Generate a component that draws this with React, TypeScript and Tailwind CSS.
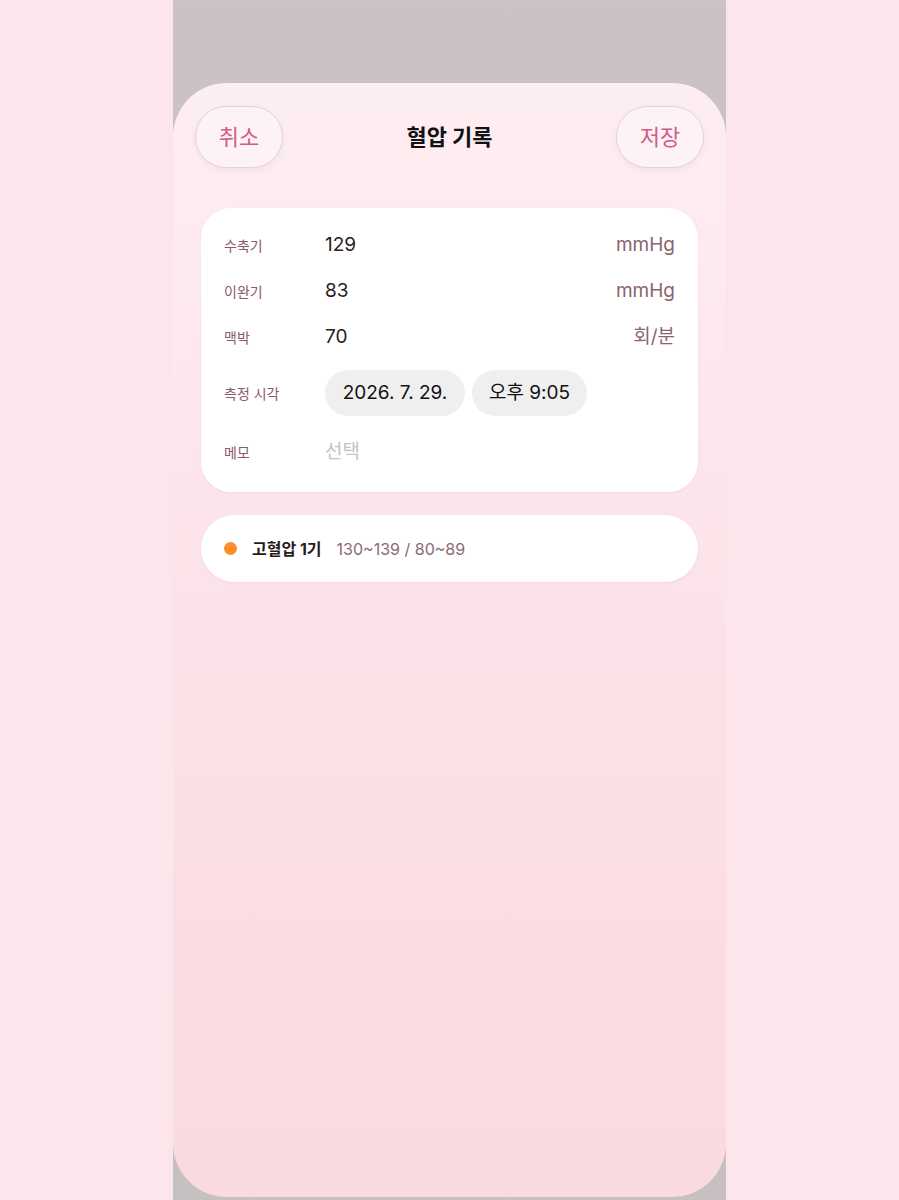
const font = 'font-["Inter","Noto_Sans_CJK_KR",sans-serif]';

type Row = { label: string; value: string; unit: string };

const rows: Row[] = [
  { label: '수축기', value: '129', unit: 'mmHg' },
  { label: '이완기', value: '83', unit: 'mmHg' },
  { label: '맥박', value: '70', unit: '회/분' },
];

function PillButton({ label }: { label: string }) {
  return (
    <button
      type="button"
      className="w-[88px] h-[62px] rounded-full border border-[#e3d3d8] bg-[#fdf3f6] shadow-[0_2px_6px_rgba(180,120,140,0.12)] text-[22px] text-[#d35b85] flex items-center justify-center"
    >
      {label}
    </button>
  );
}

export default function App() {
  return (
    <div className={`w-full h-[1200px] bg-[#fce6ec] flex justify-center ${font}`}>
      <div className="w-[553px] bg-gradient-to-b from-[#cbc2c4] to-[#c6c0c1] pt-[83px] pb-[3px] flex flex-col">
        <div className="flex-1 rounded-[54px] bg-gradient-to-b from-[#fdeef2] via-[#fce2e8] to-[#f9dae1] flex flex-col">
          <div className="flex items-center justify-between px-[22px] pt-[23px]">
            <PillButton label="취소" />
            <h1 className="text-[22px] font-bold text-[#111111]">혈압 기록</h1>
            <PillButton label="저장" />
          </div>

          <div className="mx-[28px] mt-[40px] bg-white rounded-[30px] px-[23px] pt-[14px] pb-[17px] shadow-[0_1px_3px_rgba(200,150,165,0.15)]">
            {rows.map((row) => (
              <div key={row.label} className="h-[46px] flex items-center">
                <span className="w-[101px] text-[14px] text-[#8a5a6a]">{row.label}</span>
                <span className="flex-1 text-[19px] text-[#2a1a20]">{row.value}</span>
                <span className="text-[19px] text-[#8a6470]">{row.unit}</span>
              </div>
            ))}
            <div className="h-[46px] mt-[10px] flex items-center">
              <span className="w-[101px] text-[14px] text-[#8a5a6a]">측정 시각</span>
              <div className="flex items-center gap-[7px]">
                <span className="h-[46px] w-[140px] rounded-full bg-[#efeff0] flex items-center justify-center text-[19px] text-[#111111]">
                  2026. 7. 29.
                </span>
                <span className="h-[46px] w-[115px] rounded-full bg-[#efeff0] flex items-center justify-center text-[19px] text-[#111111]">
                  오후 9:05
                </span>
              </div>
            </div>
            <div className="h-[46px] mt-[13px] flex items-center">
              <span className="w-[101px] text-[14px] text-[#8a5a6a]">메모</span>
              <span className="text-[19px] text-[#c9c1c4]">선택</span>
            </div>
          </div>

          <div className="mx-[28px] mt-[23px] h-[67px] bg-white rounded-full px-[23px] flex items-center shadow-[0_1px_3px_rgba(200,150,165,0.15)]">
            <span className="w-[13px] h-[13px] rounded-full bg-[#ff8c2a]"></span>
            <span className="ml-[15px] text-[16px] font-bold text-[#2a1a20]">고혈압 1기</span>
            <span className="ml-[15px] text-[16px] text-[#8a6a73]">130~139 / 80~89</span>
          </div>
        </div>
      </div>
    </div>
  );
}
